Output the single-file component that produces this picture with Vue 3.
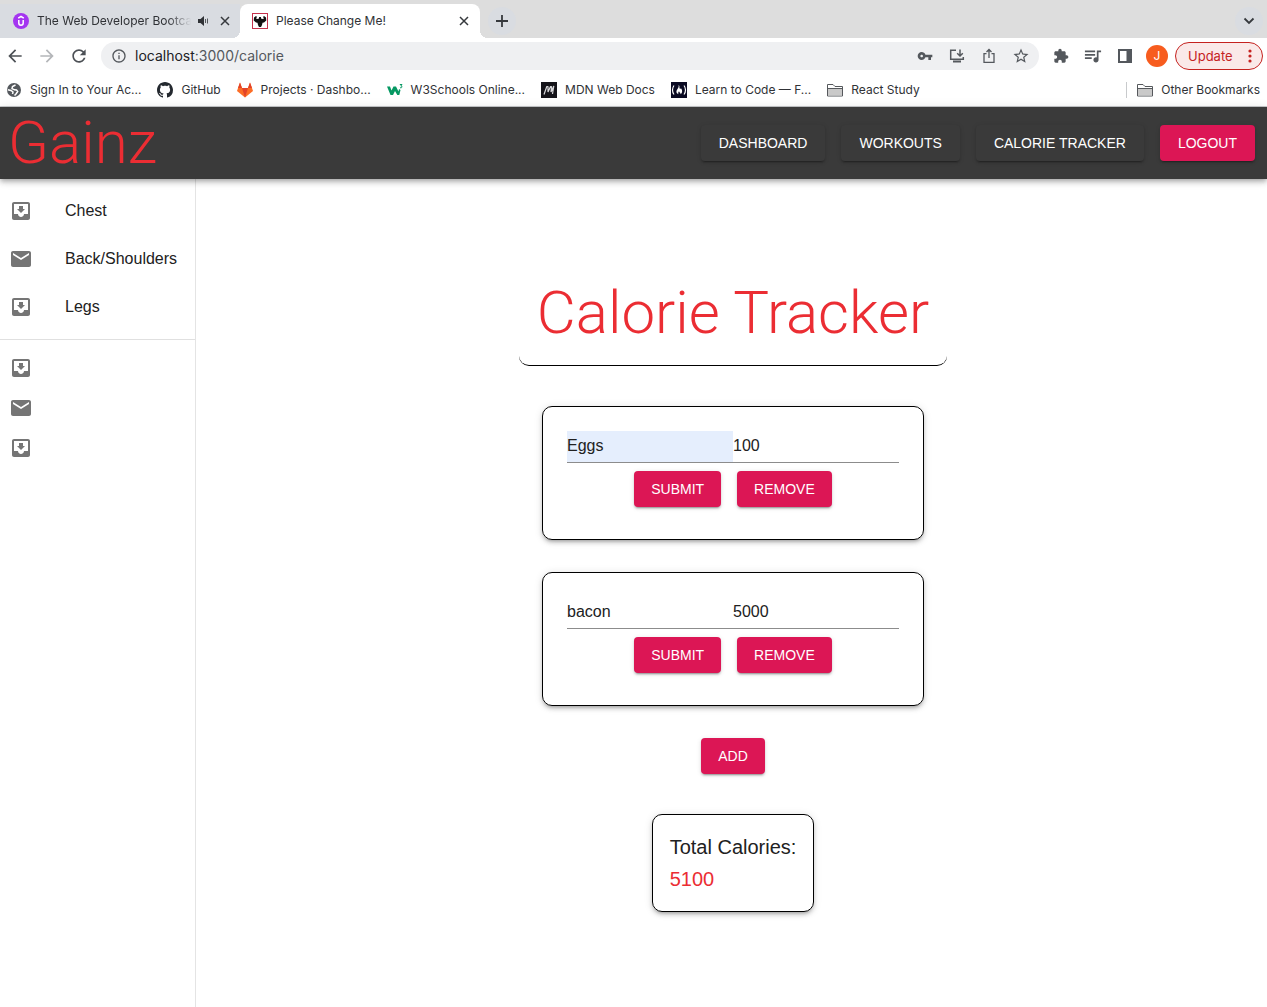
<script setup>
import { ref, computed } from 'vue'

const icons = {
  inbox: 'M19 3H4.99c-1.11 0-1.98.9-1.98 2L3 19c0 1.1.88 2 1.99 2H19c1.1 0 2-.9 2-2V5c0-1.1-.9-2-2-2zm0 12h-4c0 1.66-1.35 3-3 3s-3-1.34-3-3H4.99V5H19v10zm-3-5h-2V7h-4v3H8l4 4 4-4z',
  mail: 'M20 4H4c-1.1 0-1.99.9-1.99 2L2 18c0 1.1.9 2 2 2h16c1.1 0 2-.9 2-2V6c0-1.1-.9-2-2-2zm0 4l-8 5-8-5V6l8 5 8-5v2z',
}

const sections = [
  { label: 'Chest', icon: 'inbox' },
  { label: 'Back/Shoulders', icon: 'mail' },
  { label: 'Legs', icon: 'inbox' },
]
const shortcuts = ['inbox', 'mail', 'inbox']
const navLinks = ['Dashboard', 'Workouts', 'Calorie Tracker']

const entries = ref([
  { name: 'Eggs', calories: '100', autofilled: true },
  { name: 'bacon', calories: '5000', autofilled: false },
])
const total = computed(() => entries.value.reduce((sum, e) => sum + Number(e.calories || 0), 0))

function addEntry() {
  entries.value.push({ name: '', calories: '', autofilled: false })
}
function removeEntry(index) {
  entries.value.splice(index, 1)
}
</script>

<template>
  <div class="window">
    <header class="browser">
      <div class="tab-strip">
        <div class="tab tab-idle">
          <svg class="favicon" viewBox="0 0 16 16" aria-hidden="true">
            <circle cx="8" cy="8" r="8" fill="#a435f0" />
            <path d="M5.2 5.2 8 3.5l2.8 1.7M5.8 7v3.1a2.2 2.2 0 0 0 4.4 0V7" fill="none" stroke="#fff" stroke-width="1.5" />
          </svg>
          <a href="#" class="tab-title tab-title-faded">The Web Developer Bootca</a>
          <button class="icon-btn small" aria-label="Mute tab">
            <svg viewBox="0 0 14 14" width="14" height="14">
              <path d="M2 5v4h2.500L8 12V2L4.500 5z" fill="#303236" />
              <path d="M9.500 5v4M11.500 4.500v5" stroke="#55585c" stroke-width="1" fill="none" />
            </svg>
          </button>
          <button class="icon-btn small" aria-label="Close tab">
            <svg viewBox="0 0 10 10" width="10" height="10"><path d="M1 1l8 8M9 1l-8 8" stroke="#36393d" stroke-width="1.500" /></svg>
          </button>
        </div>
        <div class="tab tab-active">
          <svg class="favicon" viewBox="0 0 16 16" aria-hidden="true">
            <rect x=".5" y=".5" width="15" height="15" fill="#fff" stroke="#c4314b" />
            <path d="M2 4.500 4 3l1 1-1 1.500 1.500.5L7 5.500V4h2v1.500l1.500.5 1.500-.5L11 4l1-1 2 1.500.3 3L12 9.500l-1.500.2L10 12l-1 2H7l-1-2-.5-2.300L4 9.500 1.700 7.500z" fill="#111" />
          </svg>
          <a href="#" class="tab-title">Please Change Me!</a>
          <button class="icon-btn small" aria-label="Close tab">
            <svg viewBox="0 0 10 10" width="10" height="10"><path d="M1 1l8 8M9 1l-8 8" stroke="#36393d" stroke-width="1.500" /></svg>
          </button>
        </div>
        <button class="round-btn" aria-label="New tab">
          <svg viewBox="0 0 12 12" width="12" height="12"><path d="M6 0v12M0 6h12" stroke="#36393d" stroke-width="1.800" /></svg>
        </button>
        <button class="round-btn tab-search" aria-label="Search tabs">
          <svg viewBox="0 0 12 12" width="12" height="12"><path d="M1.500 3.500 6 8l4.500-4.500" fill="none" stroke="#36393d" stroke-width="1.800" /></svg>
        </button>
      </div>

      <div class="toolbar">
        <div class="tool-group">
          <button class="icon-btn" aria-label="Back">
            <svg viewBox="0 0 24 24" width="20" height="20" fill="#4d5156"><path d="M20 11H7.830l5.590-5.590L12 4l-8 8 8 8 1.410-1.410L7.830 13H20v-2z" /></svg>
          </button>
          <button class="icon-btn" aria-label="Forward">
            <svg viewBox="0 0 24 24" width="20" height="20" fill="#b4b6b9"><path d="M4 11h12.170l-5.590-5.590L12 4l8 8-8 8-1.410-1.410L16.170 13H4v-2z" /></svg>
          </button>
          <button class="icon-btn" aria-label="Reload">
            <svg viewBox="0 0 24 24" width="20" height="20" fill="#4d5156"><path d="M17.650 6.350C16.200 4.900 14.210 4 12 4c-4.420 0-7.990 3.580-7.990 8s3.570 8 7.990 8c3.730 0 6.840-2.550 7.730-6h-2.080c-.82 2.330-3.040 4-5.650 4-3.310 0-6-2.690-6-6s2.690-6 6-6c1.660 0 3.140.69 4.220 1.780L13 11h7V4l-2.350 2.350z" /></svg>
          </button>
        </div>
        <div class="omnibox">
          <svg viewBox="0 0 24 24" width="16" height="16" fill="#54585d" aria-hidden="true"><path d="M11 7h2v2h-2zm0 4h2v6h-2zm1-9C6.480 2 2 6.480 2 12s4.480 10 10 10 10-4.480 10-10S17.520 2 12 2zm0 18c-4.410 0-8-3.590-8-8s3.590-8 8-8 8 3.590 8 8-3.590 8-8 8z" /></svg>
          <div class="url" role="textbox" aria-label="Address" contenteditable="true" spellcheck="false"><span class="host">localhost</span>:3000/calorie</div>
          <div class="tool-group">
            <button class="icon-btn" aria-label="Passwords">
              <svg viewBox="0 0 24 24" width="16" height="16" fill="#54585d"><path d="M12.650 10C11.830 7.670 9.610 6 7 6c-3.310 0-6 2.690-6 6s2.690 6 6 6c2.610 0 4.830-1.670 5.650-4H17v4h4v-4h2v-4H12.650zM7 14c-1.100 0-2-.9-2-2s.9-2 2-2 2 .9 2 2-.9 2-2 2z" /></svg>
            </button>
            <button class="icon-btn" aria-label="Install app">
              <svg viewBox="0 0 16 16" width="16" height="16" fill="none" stroke="#54585d" stroke-width="1.500"><path d="M7 2.200H1.700v9h12.600V9" /><path d="M4 13.500h8" stroke-width="2" /><path d="M11 1.500V7.500M8.200 5.200 11 8l2.800-2.800" /></svg>
            </button>
            <button class="icon-btn" aria-label="Share">
              <svg viewBox="0 0 16 16" width="16" height="16" fill="none" stroke="#54585d" stroke-width="1.300"><path d="M5.500 5.700H3v8.600h10V5.700h-2.500M8 10V2M5.500 4 8 1.500 10.500 4" /></svg>
            </button>
            <button class="icon-btn" aria-label="Bookmark this tab">
              <svg viewBox="0 0 24 24" width="18" height="18" fill="#54585d"><path d="M22 9.240l-7.190-.62L12 2 9.190 8.630 2 9.240l5.460 4.730L5.820 21 12 17.270 18.180 21l-1.630-7.030L22 9.240zM12 15.400l-3.760 2.270 1-4.280-3.320-2.880 4.380-.38L12 6.100l1.710 4.040 4.380.38-3.320 2.880 1 4.280L12 15.400z" /></svg>
            </button>
          </div>
        </div>
        <div class="tool-group">
          <button class="icon-btn" aria-label="Extensions">
            <svg viewBox="0 0 24 24" width="16" height="16" fill="#54585d"><path d="M20.500 11H19V7c0-1.100-.9-2-2-2h-4V3.500C13 2.120 11.880 1 10.500 1S8 2.120 8 3.500V5H4c-1.100 0-1.990.9-1.990 2v3.800H3.500c1.490 0 2.700 1.210 2.700 2.700s-1.210 2.700-2.700 2.700H2V20c0 1.100.9 2 2 2h3.800v-1.500c0-1.490 1.210-2.700 2.700-2.700 1.490 0 2.700 1.210 2.700 2.700V22H17c1.100 0 2-.9 2-2v-4h1.500c1.380 0 2.500-1.120 2.500-2.500S21.880 11 20.500 11z" /></svg>
          </button>
          <button class="icon-btn" aria-label="Media controls">
            <svg viewBox="2 3 21 20" width="18" height="17" fill="#54585d"><path d="M15 6H3v2h12V6zm0 4H3v2h12v-2zM3 16h8v-2H3v2zM17 6v8.180c-.31-.11-.65-.18-1-.18-1.660 0-3 1.340-3 3s1.340 3 3 3 3-1.340 3-3V8h3V6h-5z" /></svg>
          </button>
          <button class="icon-btn" aria-label="Side panel">
            <svg viewBox="0 0 14 14" width="14" height="14" fill="#54585d"><path d="M0 0h14v14H0zM2 2v10h6.500V2z" fill-rule="evenodd" /></svg>
          </button>
          <button class="icon-btn" aria-label="Profile"><span class="avatar">J</span></button>
        </div>
        <button class="update">Update
          <svg viewBox="0 0 4 14" width="4" height="14" fill="#c5221f" aria-hidden="true"><circle cx="2" cy="2" r="1.600" /><circle cx="2" cy="7" r="1.600" /><circle cx="2" cy="12" r="1.600" /></svg>
        </button>
      </div>

      <nav class="bookmarks" aria-label="Bookmarks">
        <a href="#">
          <svg viewBox="0 0 16 16"><circle cx="8" cy="8" r="7" fill="#54585d" /><path d="M9.500 3 6.500 4.500 6 6.500l2.500 1.300 2 .2 1.200 1.500L10 12l-1.500 1.500" fill="none" stroke="#fff" stroke-width="1.500" /><path d="M1.800 7.800 5 8.500 7 10l-.5 2" fill="none" stroke="#fff" stroke-width="1.500" /></svg>
          Sign In to Your Ac...
        </a>
        <a href="#">
          <svg viewBox="0 0 16 16" fill="#24292f"><path d="M8 0C3.580 0 0 3.580 0 8c0 3.540 2.290 6.530 5.470 7.590.4.07.55-.17.55-.38 0-.19-.01-.82-.01-1.490-2.010.37-2.530-.49-2.690-.94-.09-.23-.48-.94-.82-1.130-.28-.15-.68-.52-.01-.53.63-.01 1.080.58 1.230.82.72 1.210 1.870.87 2.330.66.07-.52.28-.87.51-1.070-1.780-.2-3.640-.89-3.640-3.950 0-.87.31-1.590.82-2.150-.08-.2-.36-1.020.08-2.120 0 0 .67-.21 2.200.82.64-.18 1.320-.27 2-.27s1.360.09 2 .27c1.530-1.040 2.200-.82 2.200-.82.44 1.100.16 1.920.08 2.120.51.56.82 1.270.82 2.150 0 3.070-1.870 3.750-3.650 3.950.29.25.54.73.54 1.480 0 1.070-.01 1.930-.01 2.200 0 .21.15.46.55.38A8.010 8.010 0 0 0 16 8c0-4.420-3.580-8-8-8z" /></svg>
          GitHub
        </a>
        <a href="#">
          <svg viewBox="0 0 16 16"><path d="M8 15.500 0 9l1-3L3 .5 5 6h6L13 .5 15 6l1 3z" fill="#fc6d26" /><path d="M8 15.500 5 6h6z" fill="#e24329" /><path d="M1 6h4L3 .5zM11 6h4L13 .5z" fill="#e24329" /></svg>
          Projects · Dashbo...
        </a>
        <a href="#">
          <svg viewBox="0 0 16 16"><path d="M0 4.500h3l1.500 4L6.500 4.500H9l2.500 5L12 7l1.500 1-1.200 5h-2L8 9l-2 4H3.500z" fill="#059862" /><path d="M12.800 2.500h2.200L13.800 4c2 0 1.500 2.300-.8 1.700" fill="none" stroke="#059862" /></svg>
          W3Schools Online...
        </a>
        <a href="#">
          <svg viewBox="0 0 16 16"><path d="M0 0h16v16H0z" fill="#15141a" /><path d="M3 12.500 5.800 4.500 7 4.500 7 10 9.500 4.500 10.500 4.500 10 10 12.800 4 11.500 12" fill="none" stroke="#d9d9dc" stroke-width="1.200" stroke-linejoin="bevel" /></svg>
          MDN Web Docs
        </a>
        <a href="#">
          <svg viewBox="0 0 16 16"><path d="M0 0h16v16H0z" fill="#0a0a23" /><path d="M3 3.500c-2 2.500-2 6.500 0 9M13 3.500c2 2.500 2 6.500 0 9" fill="none" stroke="#fff" stroke-width="1.200" /><path d="M7.500 3c2 1.500 0 3 1.800 4l.6-.7c2 2 1.300 5-.4 6 .3-2-1-1.300-1.500-3-.8 1-1 2-.5 3-2.500-1-2.500-3.500-1-5.300C7.500 5.500 8 4.500 7.500 3z" fill="#fff" /></svg>
          Learn to Code — F...
        </a>
        <a href="#">
          <svg viewBox="0 0 16 16"><path d="M.5 14V2.500h5.500L8 4.500h7.500V14z" fill="#fff" stroke="#55585c" /><path d="M1 6.500h14v7H1z" fill="#c9c9c9" /><path d="M.5 6.500h15" stroke="#55585c" /></svg>
          React Study
        </a>
        <a href="#" class="other">
          <svg viewBox="0 0 16 16"><path d="M.5 14V2.500h5.500L8 4.500h7.500V14z" fill="#fff" stroke="#55585c" /><path d="M1 6.500h14v7H1z" fill="#c9c9c9" /><path d="M.5 6.500h15" stroke="#55585c" /></svg>
          Other Bookmarks
        </a>
      </nav>
    </header>

    <div class="app-bar">
      <a href="#" class="brand">Gainz</a>
      <nav class="app-nav" aria-label="Main">
        <button v-for="link in navLinks" :key="link" class="btn btn-dark">{{ link }}</button>
        <button class="btn">Logout</button>
      </nav>
    </div>

    <div class="body">
      <aside class="sidebar">
        <nav class="list" aria-label="Muscle groups">
          <a v-for="item in sections" :key="item.label" href="#" class="item">
            <svg viewBox="0 0 24 24" width="24" height="24"><path :d="icons[item.icon]" /></svg>
            {{ item.label }}
          </a>
        </nav>
        <hr>
        <nav class="list" aria-label="Shortcuts">
          <a v-for="(icon, i) in shortcuts" :key="i" href="#" class="item item-short" :aria-label="'Shortcut ' + (i + 1)">
            <svg viewBox="0 0 24 24" width="24" height="24"><path :d="icons[icon]" /></svg>
          </a>
        </nav>
      </aside>

      <main class="content">
        <h1>Calorie Tracker</h1>
        <form v-for="(entry, i) in entries" :key="i" class="card" @submit.prevent>
          <div class="fields">
            <input v-model="entry.name" type="text" aria-label="Food" :class="{ autofilled: entry.autofilled }">
            <input v-model="entry.calories" type="text" inputmode="numeric" aria-label="Calories">
          </div>
          <div class="actions">
            <button type="submit" class="btn">Submit</button>
            <button type="button" class="btn" @click="removeEntry(i)">Remove</button>
          </div>
        </form>
        <button class="btn" @click="addEntry">Add</button>
        <section class="total">
          <div>Total Calories:</div>
          <output>{{ total }}</output>
        </section>
      </main>
    </div>
  </div>
</template>

<style>
body {
  margin: 0;
  background: #fff;
}
</style>

<style scoped>
.window {
  display: flex;
  flex-direction: column;
  min-height: 100vh;
  font-family: "Liberation Sans", Arial, sans-serif;
  color: #212121;
}
*, *::before, *::after {
  box-sizing: border-box;
}
a {
  color: inherit;
  text-decoration: none;
}
button {
  padding: 0;
  border: 0;
  background: none;
  font: inherit;
  color: inherit;
}
svg {
  flex: none;
}

/* Browser frame */
.browser {
  font-family: Inter, sans-serif;
  font-size: 12px;
  line-height: 16px;
  color: #303236;
  border-bottom: 1px solid #c8cacc;
}
.tab-strip {
  display: flex;
  align-items: center;
  height: 38px;
  padding-top: 4px;
  background: #ddd;
}
.tab {
  display: flex;
  align-items: center;
  flex: 0 1 240px;
  min-width: 0;
  height: 34px;
  padding: 0 8px 0 12px;
}
.tab-idle {
  padding-left: 13px;
  padding-right: 7px;
  background: #d9dce1;
}
.tab-active {
  position: relative;
  background: #fff;
  border-radius: 8px 8px 0 0;
}
.tab-active::before,
.tab-active::after {
  content: "";
  position: absolute;
  bottom: 0;
  width: 8px;
  height: 8px;
}
.tab-active::before {
  right: 100%;
  background: radial-gradient(circle at 0 0, transparent 8px, #fff 8px);
}
.tab-active::after {
  left: 100%;
  background: radial-gradient(circle at 100% 0, transparent 8px, #fff 8px);
}
.favicon {
  width: 16px;
  height: 16px;
}
.tab-title {
  flex: 1;
  min-width: 0;
  margin-left: 8px;
  white-space: nowrap;
}
.tab-title-faded {
  mask-image: linear-gradient(to right, #000 85%, transparent);
}
.icon-btn {
  display: flex;
  align-items: center;
  justify-content: center;
  width: 24px;
  height: 24px;
}
.small {
  width: 16px;
}
.tab-title-faded + .small {
  margin: 0 6px 0 4px;
}
.round-btn {
  display: flex;
  align-items: center;
  justify-content: center;
  width: 28px;
  height: 28px;
  margin-left: 8px;
  border-radius: 50%;
  background: #d9dce1;
}
.tab-search {
  margin-left: auto;
  margin-right: 4px;
}
.toolbar {
  display: flex;
  align-items: center;
  height: 36px;
  padding: 0 4px 0 3px;
}
.tool-group {
  display: flex;
  align-items: center;
  gap: 8px;
}
.omnibox {
  display: flex;
  align-items: center;
  flex: 1;
  height: 28px;
  margin: 0 10px;
  padding: 0 6px 0 10px;
  border-radius: 14px;
  background: #eff0f2;
}
.url {
  flex: 1;
  margin-left: 8px;
  font-size: 14px;
  color: #54585d;
}
.host {
  color: #202124;
}
.avatar {
  width: 22px;
  line-height: 22px;
  border-radius: 50%;
  background: #f75c1e;
  color: #fff;
  text-align: center;
}
.update {
  display: flex;
  align-items: center;
  justify-content: space-between;
  width: 88px;
  height: 28px;
  margin-left: 6px;
  padding: 0 10px 0 12px;
  border: 1px solid #c5221f;
  border-radius: 14px;
  background: #fae9e8;
  font-size: 13px;
  color: #c5221f;
}
.bookmarks {
  display: flex;
  align-items: center;
  gap: 16px;
  height: 32px;
  padding: 0 7px 0 6px;
}
.bookmarks a {
  display: flex;
  align-items: center;
  gap: 8px;
  white-space: nowrap;
}
.bookmarks svg {
  width: 16px;
  height: 16px;
}
.bookmarks .other {
  margin-left: auto;
  padding-left: 10px;
  border-left: 1px solid #c8cacc;
}

/* App bar */
.app-bar {
  position: relative;
  display: flex;
  align-items: center;
  justify-content: space-between;
  height: 72px;
  padding: 0 12px 0 8px;
  background: #3a3a3a;
  box-shadow: 0 2px 4px -1px rgba(0, 0, 0, 0.2), 0 4px 5px rgba(0, 0, 0, 0.14), 0 1px 10px rgba(0, 0, 0, 0.12);
}
.brand,
h1 {
  font-family: Roboto, "Liberation Sans", sans-serif;
  font-size: 60px;
  font-weight: 300;
  line-height: 72px;
  color: #eb2d33;
}
.app-nav {
  display: flex;
  gap: 16px;
}
.btn {
  height: 36px;
  padding: 0 17px;
  border-radius: 4px;
  background: #dc1655;
  box-shadow: 0 3px 1px -2px rgba(0, 0, 0, 0.2), 0 2px 2px rgba(0, 0, 0, 0.14), 0 1px 5px rgba(0, 0, 0, 0.12);
  font-size: 14px;
  text-transform: uppercase;
  white-space: nowrap;
  color: #fff;
}
.app-nav .btn {
  padding: 0 18px;
}
.btn-dark {
  background: #3a3a3a;
}

/* Sidebar */
.body {
  display: flex;
  flex: 1;
}
.sidebar {
  flex: none;
  width: 196px;
  border-right: 1px solid #e4e4e4;
}
.list {
  padding: 8px 0;
}
.item {
  display: flex;
  align-items: center;
  gap: 32px;
  height: 48px;
  padding: 0 9px;
  font-size: 16px;
}
.item-short {
  height: 40px;
}
.item svg {
  fill: #757575;
}
hr {
  margin: 0;
  border: 0;
  border-top: 1px solid #e0e0e0;
}

/* Tracker */
.content {
  display: flex;
  flex-direction: column;
  align-items: center;
  flex: 1;
  padding: 80px 21px 24px 24px;
}
h1 {
  margin: 0 0 40px;
  padding: 18px 18px 16px;
  border-bottom: 1px solid #000;
  border-radius: 10px;
}
.card,
.total {
  border: 1px solid #000;
  border-radius: 10px;
  box-shadow: 0 3px 3px -2px rgba(0, 0, 0, 0.2), 0 3px 4px rgba(0, 0, 0, 0.14), 0 1px 8px rgba(0, 0, 0, 0.12);
}
.card {
  width: 382px;
  margin-bottom: 32px;
  padding: 24px;
}
.fields {
  display: flex;
}
.fields input {
  flex: 1;
  min-width: 0;
  height: 32px;
  padding: 0 0 2px;
  border: 0;
  border-bottom: 1px solid #8c8c8c;
  border-radius: 0;
  outline: 0;
  background: #fff;
  font: inherit;
  font-size: 16px;
  color: #212121;
}
.fields .autofilled {
  background: #e5eefd;
}
.actions {
  display: flex;
  justify-content: center;
  gap: 16px;
  margin: 8px 0;
}
.total {
  margin-top: 40px;
  padding: 16px 17px;
  font-size: 20px;
  line-height: 32px;
}
.total output {
  display: block;
  color: #eb2d33;
}
</style>
